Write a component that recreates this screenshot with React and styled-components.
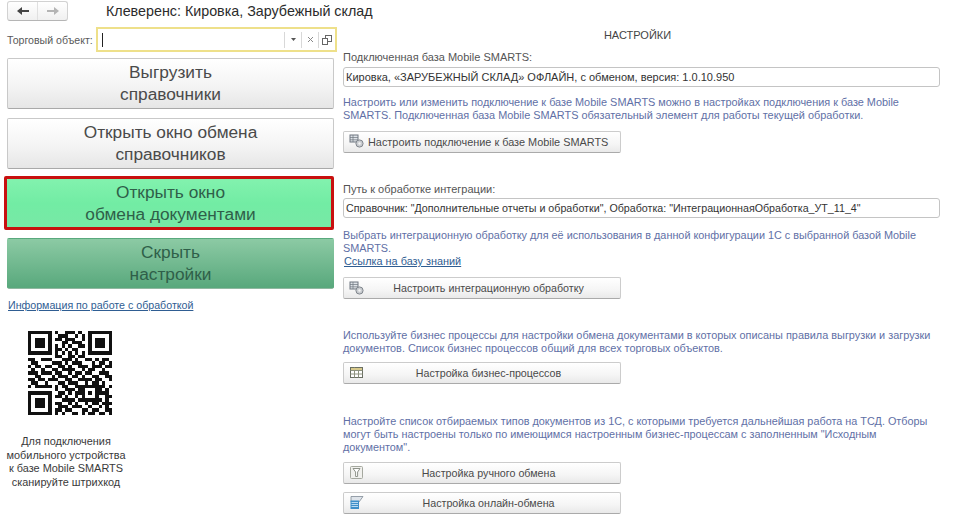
import styled, { createGlobalStyle } from "styled-components"

const Global = createGlobalStyle`
  html, body { margin: 0; padding: 0; background: #fff; }
  body { width: 973px; height: 520px; overflow: hidden; font-family: "Liberation Sans", Arial, sans-serif; color: #4a4a4a; }
  * { box-sizing: border-box; }
`

const Page = styled.div`
  display: grid;
  grid-template-columns: 343px 597px;
  width: 973px;
  height: 520px;
`

const LeftColumn = styled.div`
  display: flex;
  flex-direction: column;
  padding: 1px 0 0 7px;
`

const TopBar = styled.div`
  display: flex;
  align-items: center;
  height: 20px;
`

const NavGroup = styled.div`
  flex: none;
  display: flex;
  width: 61px;
  height: 20px;
  border: 1px solid #d2d2d2;
  border-bottom-color: #b5b5b5;
  border-radius: 3px;
  background: linear-gradient(#ffffff, #f0f0f0);
`

const NavButton = styled.div`
  flex: 1;
  display: flex;
  align-items: center;
  justify-content: center;
  & + & { border-left: 1px solid #e0e0e0; }
`

const Heading = styled.div`
  flex: none;
  margin-left: 38px;
  font-size: 14.3px;
  color: #2b2b2b;
  white-space: nowrap;
`

const ObjectRow = styled.div`
  display: flex;
  align-items: center;
  margin-top: 6px;
  height: 25px;
`

const ObjectLabel = styled.div`
  width: 89px;
  font-size: 10.6px;
  color: #5a5a5a;
  white-space: nowrap;
`

const ObjectInput = styled.div`
  flex: none;
  display: flex;
  align-items: center;
  width: 241px;
  height: 25px;
  border: 2px solid #eee08a;
  background: #fff;
  padding-left: 4px;
`

const Caret = styled.div`
  width: 1px;
  height: 14px;
  background: #222;
  margin-right: auto;
`

const InputAction = styled.div`
  width: 17px;
  height: 16px;
  border-left: 1px solid #d8d8d8;
  display: flex;
  align-items: center;
  justify-content: center;
`

const BigButtons = styled.div`
  display: flex;
  flex-direction: column;
  gap: 9px;
  margin-top: 6px;
  width: 327px;
`

const BigButton = styled.div`
  position: relative;
  height: 51px;
  display: flex;
  align-items: center;
  justify-content: center;
  text-align: center;
  font-size: 17.3px;
  line-height: 22px;
  padding-bottom: 1px;
  border-radius: 2px;
  color: ${p => (p.$tone === "plain" ? "#4a4a4a" : "#2f5f49")};
  background: ${p =>
    p.$tone === "bright"
      ? "linear-gradient(#82f2ae, #72eca4 50%, #78e8a6)"
      : p.$tone === "dark"
        ? "linear-gradient(#8ccaa4, #58a87c)"
        : "linear-gradient(#ffffff, #f4f4f4 55%, #e6e6e6)"};
  border: 1px solid ${p => (p.$tone === "plain" ? "#c9c9c9" : "transparent")};
  border-bottom-color: ${p => (p.$tone === "plain" ? "#a9a9a9" : "#8fb8a0")};
  ${p => p.$tone === "bright" && `
    &:after {
      content: "";
      position: absolute;
      inset: -3px -1px -2px -4px;
      border: 3px solid #c8100f;
      border-radius: 2px;
    }
  `}
`

const InfoLink = styled.a`
  margin: 10px 0 0 1px;
  font-size: 10.65px;
  line-height: 13px;
  color: #2f5d92;
  text-decoration: underline;
`

const QrBlock = styled.div`
  display: flex;
  flex-direction: column;
  align-items: center;
  width: 126px;
  margin-top: 19px;
`

const QrCaption = styled.div`
  margin: 20px 8px 0 0;
  text-align: center;
  font-size: 10.9px;
  line-height: 13.6px;
  color: #3a3a3a;
  white-space: nowrap;
`

const RightColumn = styled.div`
  display: flex;
  flex-direction: column;
  padding-top: 29px;
`

const SectionTitle = styled.div`
  text-align: center;
  padding-right: 8px;
  font-size: 11px;
  line-height: 13px;
  color: #444;
  margin-bottom: 9px;
`

const Section = styled.div`
  display: flex;
  flex-direction: column;
  margin-top: ${p => p.$top || 0}px;
`

const FieldLabel = styled.div`
  font-size: 11px;
  line-height: 13px;
  color: #555;
  margin-bottom: ${p => p.$gap ?? 3}px;
`

const Field = styled.div`
  height: 20px;
  border: 1px solid #c4c4c4;
  border-radius: 3px;
  padding-left: 2px;
  font-size: ${p => p.$size || 11}px;
  line-height: 18px;
  color: #333;
  white-space: nowrap;
`

const Hint = styled.div`
  margin-top: ${p => p.$top ?? 9}px;
  font-size: ${p => p.$size || 10.9}px;
  line-height: 13.3px;
  color: #6170a6;
  white-space: nowrap;
`

const KbLink = styled.a`
  display: block;
  margin-left: 1px;
  font-size: 10.9px;
  line-height: 13px;
  color: #2f5d92;
  text-decoration: underline;
`

const ActionButton = styled.div`
  display: flex;
  align-items: center;
  width: 278px;
  height: 22px;
  margin-top: ${p => p.$top ?? 9}px;
  padding: 0 4px 0 5px;
  border: 1px solid #cccccc;
  border-bottom-color: #aaaaaa;
  border-radius: 2px;
  background: linear-gradient(#ffffff, #f5f5f5 60%, #e9e9e9);
  font-size: 10.7px;
  color: #4a4a4a;
`

const IconSlot = styled.span`
  flex: none;
  display: flex;
  width: 16px;
`

const ActionLabel = styled.span`
  flex: 1;
  text-align: ${p => (p.$left ? "left" : "center")};
  font-size: ${p => (p.$left ? "10.9px" : "inherit")};
  padding-left: ${p => (p.$left ? "3px" : "0")};
  padding-right: ${p => (p.$left ? "0" : "4px")};
  white-space: nowrap;
`

const ArrowIcon = ({ color, flip }) => (
  <svg width="14" height="10" viewBox="0 0 14 10" style={flip ? { transform: "scaleX(-1)" } : undefined}>
    <path d="M1 5 L6 1 V4 H13 V6 H6 V9 Z" fill={color} />
  </svg>
)

const DropIcon = () => (
  <svg width="7" height="5" viewBox="0 0 7 5"><path d="M1 1H6L3.5 4Z" fill="#555" /></svg>
)

const CrossIcon = () => (
  <svg width="7" height="7" viewBox="0 0 7 7"><path d="M1 1L6 6M6 1L1 6" stroke="#888" strokeWidth="1" /></svg>
)

const CopyIcon = () => (
  <svg width="10" height="10" viewBox="0 0 10 10">
    <rect x="3.5" y="0.5" width="6" height="6" fill="#fff" stroke="#666" />
    <rect x="0.5" y="3.5" width="5" height="6" fill="#fff" stroke="#666" />
  </svg>
)

const GearTableIcon = () => (
  <svg width="16" height="15" viewBox="0 0 16 15">
    <rect x="1" y="1" width="8" height="7" fill="#dfe3e8" stroke="#6f7680" />
    <path d="M1 3.5H9M1 5.8H9M4 1V8" stroke="#6f7680" strokeWidth=".7" />
    <circle cx="10.5" cy="9.5" r="3.6" fill="#c9ccd0" stroke="#7f858c" />
    <circle cx="10.5" cy="9.5" r="1.2" fill="#f3f3f3" />
  </svg>
)

const GridIcon = () => (
  <svg width="16" height="14" viewBox="0 0 16 14">
    <rect x="1.5" y="1.5" width="12" height="10" fill="#fff" stroke="#6a6f63" />
    <path d="M1.5 4.5H13.5M1.5 8H13.5M5.5 1.5V11.5M9.5 4.5V11.5" stroke="#8d927f" />
    <rect x="2" y="2" width="11" height="2" fill="#d7c98c" />
  </svg>
)

const FunnelIcon = () => (
  <svg width="16" height="15" viewBox="0 0 16 15">
    <rect x="1.5" y="1.5" width="12" height="12" rx="1" fill="#f1f1ee" stroke="#a5a89f" />
    <path d="M4 3.5H11L8.6 7V11.5H6.6V7Z" fill="#fff" stroke="#8f938a" />
  </svg>
)

const DocFunnelIcon = () => (
  <svg width="16" height="15" viewBox="0 0 16 15">
    <path d="M2 1.5H14L10 7H2Z" fill="#dfe4ea" stroke="#7f8a96" strokeWidth=".8" />
    <rect x="1.5" y="5.5" width="8.5" height="8.5" fill="#3f8fc9" />
    <path d="M2.5 7.5H9M2.5 9.5H9M2.5 11.5H9" stroke="#d9eefb" strokeWidth=".8" />
  </svg>
)

const QR_ROWS = [
  "1111111010011101001111111",
  "1000001001110010101000001",
  "1011101011011100101011101",
  "1011101000110111001011101",
  "1011101010101001101011101",
  "1000001011010110001000001",
  "1111111010101010101111111",
  "0000000011001101100000000",
  "1100111000111010011010110",
  "0110000111010111000101101",
  "1011011001101001110111011",
  "0100100110111100101100100",
  "1110111011001011011001110",
  "0011000101110110100110011",
  "1101101110011001111011001",
  "0110010001101110010110100",
  "1011111010110011111111101",
  "0000000010011101100011010",
  "1111111001101011101011110",
  "1000001011010010100010011",
  "1011101000111101111111010",
  "1011101011001010010110111",
  "1011101001110111001001010",
  "1000001011011000110110011",
  "1111111010100110101101101",
]

const QrCode = () => (
  <svg width="84" height="84" viewBox="0 0 25 25" shapeRendering="crispEdges">
    {QR_ROWS.map((row, y) =>
      [...row].map((cell, x) =>
        cell === "1" ? <rect key={`${x}-${y}`} x={x} y={y} width="1" height="1" fill="#111" /> : null
      )
    )}
  </svg>
)

const SettingsButton = ({ icon, left, top, children }) => (
  <ActionButton $top={top}>
    <IconSlot>{icon}</IconSlot>
    <ActionLabel $left={left}>{children}</ActionLabel>
  </ActionButton>
)

export default function App() {
  return (
    <>
      <Global />
      <Page>
        <LeftColumn>
          <TopBar>
            <NavGroup>
              <NavButton><ArrowIcon color="#444" /></NavButton>
              <NavButton><ArrowIcon color="#b4b4b4" flip /></NavButton>
            </NavGroup>
            <Heading>Клеверенс: Кировка, Зарубежный склад</Heading>
          </TopBar>
          <ObjectRow>
            <ObjectLabel>Торговый объект:</ObjectLabel>
            <ObjectInput>
              <Caret />
              <InputAction><DropIcon /></InputAction>
              <InputAction><CrossIcon /></InputAction>
              <InputAction><CopyIcon /></InputAction>
            </ObjectInput>
          </ObjectRow>
          <BigButtons>
            <BigButton $tone="plain">Выгрузить<br />справочники</BigButton>
            <BigButton $tone="plain">Открыть окно обмена<br />справочников</BigButton>
            <BigButton $tone="bright">Открыть окно<br />обмена документами</BigButton>
            <BigButton $tone="dark">Скрыть<br />настройки</BigButton>
          </BigButtons>
          <InfoLink>Информация по работе с обработкой</InfoLink>
          <QrBlock>
            <QrCode />
            <QrCaption>Для подключения<br />мобильного устройства<br />к базе Mobile SMARTS<br />сканируйте штрихкод</QrCaption>
          </QrBlock>
        </LeftColumn>

        <RightColumn>
          <SectionTitle>НАСТРОЙКИ</SectionTitle>
          <Section>
            <FieldLabel>Подключенная база Mobile SMARTS:</FieldLabel>
            <Field>Кировка, «ЗАРУБЕЖНЫЙ СКЛАД» ОФЛАЙН, с обменом, версия: 1.0.10.950</Field>
            <Hint>Настроить или изменить подключение к базе Mobile SMARTS можно в настройках подключения к базе Mobile<br />SMARTS. Подключенная база Mobile SMARTS обязательный элемент для работы текущей обработки.</Hint>
            <SettingsButton icon={<GearTableIcon />} left top={8}>Настроить подключение к базе Mobile SMARTS</SettingsButton>
          </Section>
          <Section $top={30}>
            <FieldLabel $gap={2}>Путь к обработке интеграции:</FieldLabel>
            <Field $size={10.7}>Справочник: "Дополнительные отчеты и обработки", Обработка: "ИнтеграционнаяОбработка_УТ_11_4"</Field>
            <Hint $top={11} $size={10.85}>Выбрать интеграционную обработку для её использования в данной конфигурации 1С с выбранной базой Mobile<br />SMARTS.</Hint>
            <KbLink>Ссылка на базу знаний</KbLink>
            <SettingsButton icon={<GearTableIcon />}>Настроить интеграционную обработку</SettingsButton>
          </Section>
          <Section $top={30}>
            <Hint $top={0}>Используйте бизнес процессы для настройки обмена документами в которых описаны правила выгрузки и загрузки<br />документов. Список бизнес процессов общий для всех торговых объектов.</Hint>
            <SettingsButton icon={<GridIcon />} top={6}>Настройка бизнес-процессов</SettingsButton>
          </Section>
          <Section $top={31}>
            <Hint $top={0} $size={10.85}>Настройте список отбираемых типов документов из 1С, с которыми требуется дальнейшая работа на ТСД. Отборы<br />могут быть настроены только по имеющимся настроенным бизнес-процессам с заполненным "Исходным<br />документом".</Hint>
            <SettingsButton icon={<FunnelIcon />} top={7}>Настройка ручного обмена</SettingsButton>
            <SettingsButton icon={<DocFunnelIcon />} top={8}>Настройка онлайн-обмена</SettingsButton>
          </Section>
        </RightColumn>
      </Page>
    </>
  )
}
